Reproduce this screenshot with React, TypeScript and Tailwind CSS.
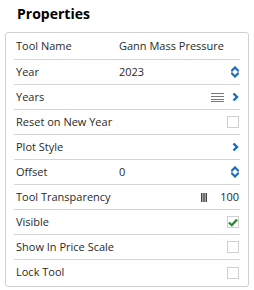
import React from "react";

const Spinner = () => (
  <svg width="8" height="12" viewBox="0 0 8 12" className="text-[#1a6cb8]">
    <path d="M1 4.5 L4 1.5 L7 4.5" fill="none" stroke="currentColor" strokeWidth="2.2" strokeLinecap="square" />
    <path d="M1 7.5 L4 10.5 L7 7.5" fill="none" stroke="currentColor" strokeWidth="2.2" strokeLinecap="square" />
  </svg>
);

const Chevron = () => (
  <svg width="7" height="10" viewBox="0 0 7 10" className="text-[#1a6cb8]">
    <path d="M1.5 1.5 L5 5 L1.5 8.5" fill="none" stroke="currentColor" strokeWidth="2.4" />
  </svg>
);

const Lines = () => (
  <svg width="13" height="10" viewBox="0 0 13 10">
    <path d="M0 1.5H13M0 4.5H13M0 7.5H13M0 9.5H13" stroke="#777" strokeWidth="1" />
  </svg>
);

const Bars = () => (
  <svg width="6" height="9" viewBox="0 0 6 9">
    <path d="M0.75 0V9M3 0V9M5.25 0V9" stroke="#444" strokeWidth="1.5" />
  </svg>
);

const Check = ({ checked }: { checked?: boolean }) => (
  <div className="w-[12px] h-[12px] border border-[#cfcfcf] bg-white flex items-center justify-center">
    {checked && (
      <svg width="10" height="9" viewBox="0 0 10 9">
        <path d="M1 4.5 L3.8 7.2 L9 1.5" fill="none" stroke="#1f8a1f" strokeWidth="2.2" />
      </svg>
    )}
  </div>
);

type Row = { label: string; value?: string; right?: React.ReactNode };

const rows: Row[] = [
  { label: "Tool Name", value: "Gann Mass Pressure" },
  { label: "Year", value: "2023", right: <Spinner /> },
  {
    label: "Years",
    right: (
      <div className="flex items-center gap-[8px]">
        <Lines />
        <Chevron />
      </div>
    ),
  },
  { label: "Reset on New Year", right: <Check /> },
  { label: "Plot Style", right: <Chevron /> },
  { label: "Offset", value: "0", right: <Spinner /> },
  {
    label: "Tool Transparency",
    right: (
      <div className="flex items-center gap-[13px]">
        <Bars />
        <span>100</span>
      </div>
    ),
  },
  { label: "Visible", right: <Check checked /> },
  { label: "Show In Price Scale", right: <Check /> },
  { label: "Lock Tool", right: <Check /> },
];

export default function App() {
  return (
    <div className="w-[254px] h-[290px] bg-white text-[#2a2a2a] font-['Open_Sans',sans-serif]">
      <div className="pl-[17px] pt-[3px] h-[32px] text-[14px] font-bold text-black leading-[22px]">Properties</div>
      <div className="ml-[5px] w-[244px] border border-[#d0d0d0] rounded-[3px] px-[8px] pt-[1px] pb-[1px] text-[11px]">
        {rows.map((r, i) => (
          <div
            key={r.label}
            className={`flex items-center ${i === 0 ? "h-[26px]" : "h-[25px]"} pl-[2px] pr-[1px] ${i < rows.length - 1 ? "border-b border-[#d5d5d5]" : ""}`}
          >
            <div className="w-[103px] shrink-0">{r.label}</div>
            <div className="flex-1">{r.value}</div>
            <div className="flex items-center justify-end">{r.right}</div>
          </div>
        ))}
      </div>
    </div>
  );
}
